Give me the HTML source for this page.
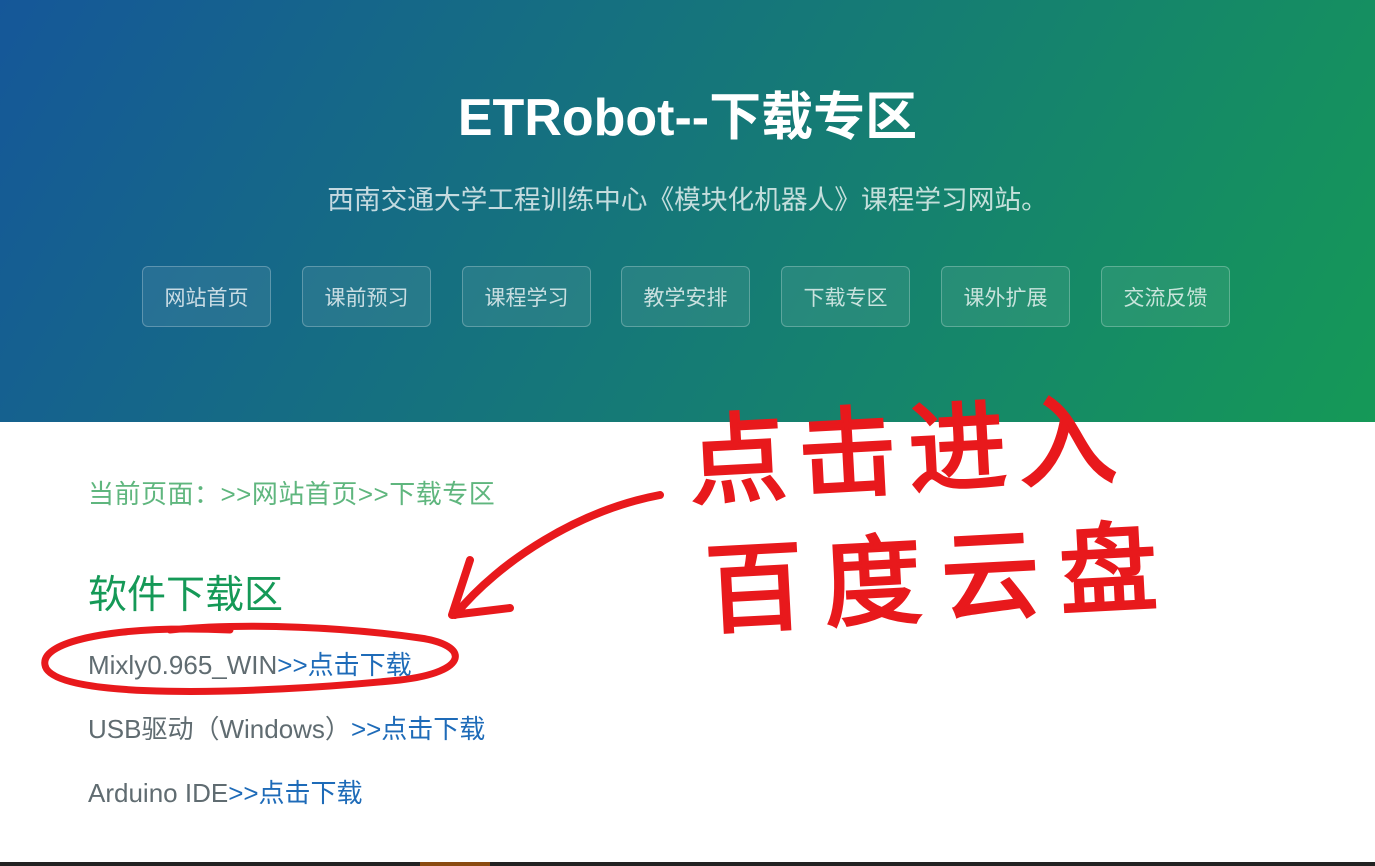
<!DOCTYPE html>
<html><head><meta charset="utf-8"><style>
body{margin:0;width:1375px;height:866px;overflow:hidden;background:#fff;font-family:"Liberation Sans","Noto Sans CJK SC",sans-serif;position:relative}
.hdr{position:absolute;left:0;top:0;width:1375px;height:422px;background:linear-gradient(120deg,#155799,#159957);color:#fff;text-align:center}
h1{position:absolute;top:86px;left:0;width:100%;margin:0;font-size:52px;font-weight:bold;line-height:64px}
.sub{position:absolute;top:180px;width:100%;font-size:26.7px;opacity:.75;line-height:40px}
.btn{position:absolute;top:266px;width:127px;height:59px;border:1px solid rgba(255,255,255,.25);background:rgba(255,255,255,.08);border-radius:6px;color:rgba(255,255,255,.75);font-size:21px;line-height:63px;text-align:center}
.t{position:absolute;left:88px;font-size:26px;color:#606c71;white-space:nowrap}
a{color:#1e6bb8;text-decoration:none}
.hand{position:absolute;color:#e8191c;font-family:"WenQuanYi Zen Hei","Noto Sans CJK SC",sans-serif;font-size:98px;letter-spacing:12px;white-space:nowrap;transform:rotate(-3deg);-webkit-text-stroke:3px #e8191c}
</style></head><body>
<div class="hdr">
<h1>ETRobot--下载专区</h1>
<div class="sub">西南交通大学工程训练中心《模块化机器人》课程学习网站。</div>
<div class="btn" style="left:142px">网站首页</div>
<div class="btn" style="left:302px">课前预习</div>
<div class="btn" style="left:462px">课程学习</div>
<div class="btn" style="left:621px">教学安排</div>
<div class="btn" style="left:781px">下载专区</div>
<div class="btn" style="left:941px">课外扩展</div>
<div class="btn" style="left:1101px">交流反馈</div>
</div>
<div class="t" style="top:474px;color:#5fb67e;letter-spacing:0.5px">当前页面：&gt;&gt;网站首页&gt;&gt;下载专区</div>
<div class="t" style="top:564px;font-size:39px;color:#159957">软件下载区</div>
<div class="t" style="top:645px">Mixly0.965_WIN<a>&gt;&gt;点击下载</a></div>
<div class="t" style="top:709px">USB驱动（Windows）<a>&gt;&gt;点击下载</a></div>
<div class="t" style="top:773px">Arduino IDE<a>&gt;&gt;点击下载</a></div>
<div class="hand" style="left:688px;top:372px">点击进入</div>
<div class="hand" style="left:705px;top:500px;letter-spacing:20px">百度云盘</div>
<svg style="position:absolute;left:0;top:0" width="1375" height="866">
<path d="M230 630 C120 625 40 640 45 665 C50 700 250 695 400 680 C470 672 470 645 420 638 C350 628 250 622 170 630" fill="none" stroke="#e8191c" stroke-width="7" stroke-linecap="round"/>
<path d="M660 495 C580 510 500 560 455 615" fill="none" stroke="#e8191c" stroke-width="8" stroke-linecap="round"/>
<path d="M470 560 L452 615 L510 608" fill="none" stroke="#e8191c" stroke-width="8" stroke-linecap="round" stroke-linejoin="round"/>
<rect x="0" y="862" width="1375" height="4" fill="#222"/>
<rect x="420" y="862" width="70" height="4" fill="#8a4a10"/>
</svg>
</body></html>
